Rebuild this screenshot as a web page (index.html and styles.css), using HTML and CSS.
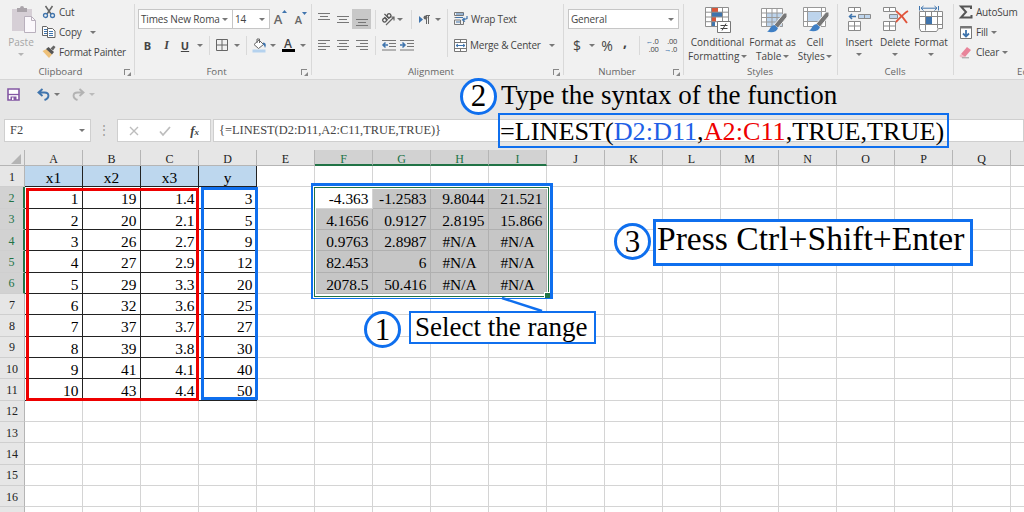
FILE: index.html
```html
<!DOCTYPE html>
<html lang="en">
<head>
  <meta charset="UTF-8">
  <meta name="viewport" content="width=device-width, initial-scale=1.0">
  <title>LINEST Function</title>
  <link rel="stylesheet" href="styles.css">
</head>
<body>

  <div class="ribbon">

    <!-- Clipboard -->
    <div class="group clipboard">
      <div class="tools">
        <div class="big-btn disabled">
          <svg width="26" height="28" viewBox="0 0 26 28"><path d="M1 3h20v22H1z" fill="#d6cfd6"/><path d="M6 2h3a2 2 0 0 1 4 0h3v4H6z" fill="#aaa4aa"/><path d="M13.500 10.500h7l4 4v12h-11z" fill="#fbf8fc" stroke="#b9b0bd"/><path d="M20.500 10.500v4h4" fill="none" stroke="#b9b0bd"/></svg>
          <span>Paste</span>
          <i class="caret"></i>
        </div>
        <div class="list">
          <div class="item">
            <svg width="14" height="14" viewBox="0 0 14 14"><path d="M3.500 1l5.500 8M10.500 1L5 9" stroke="#666" stroke-width="1.500" fill="none"/><circle cx="3.500" cy="10.500" r="2" fill="none" stroke="#3f74ad" stroke-width="1.300"/><circle cx="10.500" cy="10.500" r="2" fill="none" stroke="#3f74ad" stroke-width="1.300"/></svg>
            <span>Cut</span>
          </div>
          <div class="item">
            <svg width="14" height="14" viewBox="0 0 14 14"><path d="M.5 1.500h4l2 2v7h-6z" fill="#fff" stroke="#666"/><path d="M2 4.500h3M2 6.500h3M2 8.500h3" stroke="#3f74ad"/><path d="M5.500 3.500h5l2.500 2.500v6.500H5.500z" fill="#fff" stroke="#666"/><path d="M7 6.500h4M7 8.500h4M7 10.500h4" stroke="#3f74ad"/></svg>
            <span>Copy</span><i class="caret far"></i>
          </div>
          <div class="item">
            <svg width="14" height="14" viewBox="0 0 14 14"><path d="M.5 6l4-2 5.500 5.500L7 13z" fill="#eec078"/><path d="M4 4l2.500-2L12 7l-2 2.500z" fill="#555"/><path d="M8.500 3.500l3-3L13.500 2l-2.500 3.500z" fill="#666"/></svg>
            <span>Format Painter</span>
          </div>
        </div>
      </div>
      <div class="caption">Clipboard<b class="launcher"></b></div>
    </div>

    <!-- Font -->
    <div class="group font">
      <div class="tools stacked">
        <div class="row font-top">
          <div class="select"><span>Times New Roma</span><i class="caret"></i></div>
          <div class="select"><span>14</span><i class="caret"></i></div>
          <span class="grow">A<svg width="5" height="4" viewBox="0 0 5 4"><path d="M0 3l2.500-3L5 3z" fill="#3f74ad"/></svg></span>
          <span class="grow small">A<svg width="5" height="4" viewBox="0 0 5 4"><path d="M0 0h5L2.500 3z" fill="#3f74ad"/></svg></span>
        </div>
        <div class="row font-bottom">
          <b>B</b><b class="italic">I</b><b class="under">U</b><i class="caret"></i><i class="sep"></i>
          <svg width="12" height="12" viewBox="0 0 12 12"><path d="M.5.5h11v11H.5zM6 0v12M0 6h12" fill="none" stroke="#666"/></svg>
          <i class="caret"></i><i class="sep"></i>
          <svg width="15" height="15" viewBox="0 0 15 15"><path d="M7 2l4.500 4.500-5 4L2 6.500z" fill="#fff" stroke="#666"/><path d="M5 5V1h2.500v4" fill="none" stroke="#666"/><path d="M11 4.500c3 0 3.500 3 2 5.500-.5-2-1-3-2-3.500z" fill="#3f74ad"/><path d="M.5 11.500h13v3H.5z" fill="#b5d2ee"/></svg>
          <i class="caret"></i>
          <span class="font-color">A</span>
          <i class="caret"></i>
        </div>
      </div>
      <div class="caption">Font<b class="launcher"></b></div>
    </div>

    <!-- Alignment -->
    <div class="group alignment">
      <div class="tools">
        <div class="stacked align-left">
          <div class="row align-top">
            <svg class="up" width="12" height="8" viewBox="0 0 12 8"><path d="M0 1.500h12M2 4.500h8M0 7.500h12" stroke="#777"/></svg>
            <svg width="12" height="8" viewBox="0 0 12 8"><path d="M0 1.500h12M2 4.500h8M0 7.500h12" stroke="#777"/></svg>
            <span class="pressed"><svg width="12" height="8" viewBox="0 0 12 8"><path d="M0 1.500h12M2 4.500h8M0 7.500h12" stroke="#777"/></svg></span>
            <i class="sep"></i>
            <svg width="14" height="14" viewBox="0 0 14 14"><path d="M5 13l8-8M13 8.500V5H9.500" fill="none" stroke="#666" stroke-width="1.200"/><g transform="rotate(-45 5 6)" fill="none" stroke="#555" stroke-width="1.300"><circle cx="2.500" cy="6.500" r="1.900"/><path d="M4.600 4.200v4.600M6.800 2v6.800"/><circle cx="8.800" cy="6.500" r="1.900"/></g></svg>
            <i class="caret"></i><i class="sep"></i>
            <svg width="11" height="9" viewBox="0 0 11 9"><path d="M0 1l4 3.500L0 8z" fill="#3f74ad"/><path d="M7.500 9V.5M9.500 9V.5M11 .5H7" fill="none" stroke="#666"/><circle cx="6.500" cy="2.500" r="2" fill="#666"/></svg>
            <i class="caret"></i>
          </div>
          <div class="row align-bottom">
            <svg width="12" height="10" viewBox="0 0 12 10"><path d="M0 .5h12M0 3.500h8M0 6.500h12M0 9.500h8" stroke="#777"/></svg>
            <svg width="12" height="10" viewBox="0 0 12 10"><path d="M0 .5h12M2 3.500h8M0 6.500h12M2 9.500h8" stroke="#777"/></svg>
            <svg width="12" height="10" viewBox="0 0 12 10"><path d="M0 .5h12M4 3.500h8M0 6.500h12M4 9.500h8" stroke="#777"/></svg>
            <i class="sep"></i>
            <svg width="14" height="11" viewBox="0 0 14 11"><path d="M0 .5h14M7 3.500h7M7 6.500h7M0 10h14" stroke="#777"/><path d="M6 5H1M3.500 2.500L1 5l2.500 2.500" fill="none" stroke="#3f74ad" stroke-width="1.500"/></svg>
            <svg width="14" height="11" viewBox="0 0 14 11"><path d="M0 .5h14M7 3.500h7M7 6.500h7M0 10h14" stroke="#777"/><path d="M0 5h5M2.500 2.500L5 5 2.500 7.500" fill="none" stroke="#3f74ad" stroke-width="1.500"/></svg>
          </div>
        </div>
        <div class="stacked align-right">
          <div class="item">
            <svg width="14" height="14" viewBox="0 0 14 14"><path d="M.5.5h9v3h-9zM.5 5.500h8M.5 8h6v4.500h-6zM6.500 12.500h3V9" fill="none" stroke="#777"/><path d="M2 2h8M2 5.500h7M2 10h4" stroke="#3f74ad"/><path d="M13 4v2.500L8.500 8M10.500 6L8.500 8l2.500 1.500" fill="none" stroke="#3f74ad" stroke-width="1.200"/></svg>
            <span>Wrap Text</span>
          </div>
          <div class="item">
            <svg width="13" height="13" viewBox="0 0 13 13"><path d="M.5.500h12v12H.5zM.5 3.500h12M.5 9.500h12M6.500.500v3M6.500 9.500v3" fill="#fff" stroke="#777"/><path d="M2 6.500h9M4 5L2 6.500 4 8M9 5l2 1.500L9 8" fill="none" stroke="#3f74ad"/></svg>
            <span>Merge &amp; Center</span><i class="caret far"></i>
          </div>
        </div>
      </div>
      <div class="caption">Alignment<b class="launcher"></b></div>
    </div>

    <!-- Number -->
    <div class="group number">
      <div class="tools stacked">
        <div class="row"><div class="select"><span>General</span><i class="caret"></i></div></div>
        <div class="row number-bottom">
          <span>$</span><i class="caret"></i><span>%</span><span class="comma">,</span><i class="sep"></i>
          <span class="decimals"><span><em>←</em>.0</span><span>.00</span></span>
          <span class="decimals"><span>.00</span><span><em>→</em>.0</span></span>
        </div>
      </div>
      <div class="caption">Number<b class="launcher"></b></div>
    </div>

    <!-- Styles -->
    <div class="group styles">
      <div class="tools">
        <div class="big-btn">
          <svg width="28" height="27" viewBox="0 0 28 27"><path d="M1.500 1.500h23v19h-23z" fill="#fff"/><path d="M8 1.500h6v5H8zM8 11h4v5H8z" fill="#d9573a"/><path d="M8 6h10v5H8zM8 16h3v5H8z" fill="#3f74ad"/><path d="M1.500 1.500h23v19h-23zM1.500 6.200h23M1.500 11h23M1.500 15.700h23M7.500 1.500v19M18.500 1.500v19" fill="none" stroke="#8f8f8f"/><path d="M13.500 15.500h13v11h-13z" fill="#fff" stroke="#777"/><path d="M16.500 19.500h7M16.500 22.500h7M22 17.500l-4 7" stroke="#444"/></svg>
          <span>Conditional<br>Formatting <i class="caret"></i></span>
        </div>
        <div class="big-btn table-btn">
          <svg width="28" height="27" viewBox="0 0 28 27"><path d="M2.500 2.500h21v18h-21z" fill="#fff"/><path d="M8 7h16v14H8z" fill="#bdd4ec"/><path d="M2.500 2.500h21v18h-21zM2.500 7h21M2.500 11.500h21M2.500 16h21M7.500 2.500v18M13 2.500v18M18 2.500v18" fill="none" stroke="#999"/><path d="M15 19L25 7h3v4l-9 11z" fill="#777" stroke="#f1f1f1"/><path d="M8 25.500c3-1 3-6 7.500-6.500l3.500 3c-1 4-6 5-11 3.500z" fill="#3f7fc4"/></svg>
          <span>Format as<br>Table <i class="caret"></i></span>
        </div>
        <div class="big-btn cell-btn">
          <svg width="28" height="27" viewBox="0 0 28 27"><path d="M2.500 1.500h22v19h-22z" fill="#fff"/><path d="M7 6h14v9H7z" fill="#bdd4ec"/><path d="M2.500 1.500h22v19h-22zM2.500 5.500h22M2.500 15.500h22M6.500 1.500v19M20.500 1.500v19" fill="none" stroke="#999"/><path d="M15 18L25 6h3v4l-9 11z" fill="#777" stroke="#f1f1f1"/><path d="M8 24.500c3-1 3-6 7.500-6.500l3.500 3c-1 4-6 5-11 3.500z" fill="#3f7fc4"/></svg>
          <span>Cell<br>Styles <i class="caret"></i></span>
        </div>
      </div>
      <div class="caption">Styles</div>
    </div>

    <!-- Cells -->
    <div class="group cells">
      <div class="tools">
        <div class="big-btn">
          <svg width="26" height="27" viewBox="0 0 26 27"><path d="M2.500 1.500h12v4h-12zM8.500 1.500v4M2.500 15.500h12v9h-12zM8.500 15.500v9M2.500 20h12" fill="#fff" stroke="#8a8a8a"/><path d="M12.500 8.500h12v4h-12zM18.500 8.500v4" fill="#bdd4ec" stroke="#8a8a8a"/><path d="M10 10.500H4M6 8l-2.500 2.500L6 13" fill="none" stroke="#3f74ad" stroke-width="1.500"/></svg>
          <span>Insert</span><i class="caret"></i>
        </div>
        <div class="big-btn">
          <svg width="28" height="27" viewBox="0 0 28 27"><path d="M2.500 1.500h12v4h-12zM8.500 1.500v4M2.500 15.500h12v9h-12zM8.500 15.500v9M2.500 20h12" fill="#fff" stroke="#8a8a8a"/><path d="M8.500 8.500h8v4h-8z" fill="#bdd4ec" stroke="#8a8a8a"/><path d="M15 5c4 3 8 7 11 12M27 5c-5 3-8 7-12 11" fill="none" stroke="#e0533a" stroke-width="1.800"/></svg>
          <span>Delete</span><i class="caret"></i>
        </div>
        <div class="big-btn">
          <svg width="26" height="27" viewBox="0 0 26 27"><path d="M1.500 5.500h23v17h-4l-2 3H3l-1.500-3z" fill="#fff" stroke="#8a8a8a"/><path d="M1.500 10.500h23M1.500 18.500h23M7.500 5.500v19M13.500 5.500v5M19.500 5.500v17" stroke="#8a8a8a" fill="none"/><path d="M8 11h6v7H8z" fill="#3f74ad"/><path d="M1.500 0v4.500M20.500 0v4.500M3 2.200h16M5.500 0L3 2.200l2.500 2.300M16.500 0L19 2.200l-2.500 2.300" fill="none" stroke="#3f74ad"/></svg>
          <span>Format</span><i class="caret"></i>
        </div>
      </div>
      <div class="caption">Cells</div>
    </div>

    <!-- Editing -->
    <div class="group editing">
      <div class="list">
        <div class="item">
          <svg width="14" height="14" viewBox="0 0 14 14"><path d="M12 4V1.500H2L7 7l-5 5.500h10.500V10" fill="none" stroke="#555" stroke-width="2"/></svg>
          <span>AutoSum</span>
        </div>
        <div class="item">
          <svg width="14" height="14" viewBox="0 0 14 14"><path d="M1.500 1.500h11v12h-11z" fill="#fff" stroke="#777"/><path d="M1 2.500h12" stroke="#777" stroke-width="2"/><path d="M7 5v6M4 8.500L7 11.500l3-3" fill="none" stroke="#3f74ad" stroke-width="1.800"/></svg>
          <span>Fill</span><i class="caret"></i>
        </div>
        <div class="item">
          <svg width="14" height="14" viewBox="0 0 14 14"><path d="M2 9l6-7 4 3-6 7z" fill="#e8849a"/><path d="M2 9l4 3-1 .5H2L.5 11z" fill="#f3b9c5"/><path d="M3 12.800h7" stroke="#999"/></svg>
          <span>Clear</span><i class="caret"></i>
        </div>
      </div>
      <div class="caption">Editing</div>
    </div>
  </div>

  <!-- Quick access toolbar -->
  <div class="quick-access">
    <svg width="13" height="13" viewBox="0 0 13 13"><path d="M1 1h11v11H1z" fill="#fff" stroke="#8458a4" stroke-width="1.600"/><path d="M1 6.500h11" stroke="#8458a4" stroke-width="1.300"/><path d="M3.500 8.500h6V12h-6z" fill="#8458a4"/><path d="M5 9.500h1.500V12H5z" fill="#fff"/></svg>
    <svg width="13" height="13" viewBox="0 0 13 13"><path d="M5.500 1L1.500 4.500l4 3.500M2 4.500h5.500c5 0 5.500 5.500 0 7.500" fill="none" stroke="#3f74ad" stroke-width="1.900"/></svg>
    <i class="caret"></i>
    <svg width="13" height="13" viewBox="0 0 13 13"><path d="M7.500 1l4 3.500-4 3.500M11 4.500H5.500c-5 0-5.500 5.500 0 7.500" fill="none" stroke="#b3b3b3" stroke-width="1.900"/></svg>
    <i class="caret light"></i>
  </div>

  <!-- Formula bar -->
  <div class="formula-bar">
    <div class="name-box"><span>F2</span><i class="caret"></i></div>
    <div class="dots">⋮</div>
    <div class="formula-buttons">
      <svg width="10" height="10" viewBox="0 0 10 10"><path d="M1 1l8 8M9 1L1 9" stroke="#bdbdbd" stroke-width="1.400"/></svg>
      <svg width="12" height="10" viewBox="0 0 12 10"><path d="M1 5.500L4 9l7-8" fill="none" stroke="#bdbdbd" stroke-width="1.800"/></svg>
      <span class="fx">f<small>x</small></span>
    </div>
    <div class="formula-input">{=LINEST(D2:D11,A2:C11,TRUE,TRUE)}</div>
  </div>

  <!-- Worksheet -->
  <div class="sheet" id="sheet"></div>

  <!-- Notes over the sheet -->
  <div class="mark mark-x"></div>
  <div class="mark mark-y"></div>
  <div class="mark mark-range"></div>
  <svg class="pointer" width="44" height="16" viewBox="0 0 44 16"><path d="M2 1l40 13" stroke="#0f6fee" stroke-width="2.500"/></svg>

  <div class="step step-1">1</div>
  <div class="note note-select">Select the range</div>

  <div class="step step-2">2</div>
  <div class="note note-type">Type the syntax of the function</div>
  <div class="note note-formula">=LINEST(<span class="blue">D2:D11</span>,<span class="red">A2:C11</span>,TRUE,TRUE)</div>

  <div class="step step-3">3</div>
  <div class="note note-press">Press Ctrl+Shift+Enter</div>

  <script>
    const columns = 'ABCDEFGHIJKLMNOPQR'.split('');
    const data = [
      ['x1', 'x2', 'x3', 'y'],
      [1, 19, 1.4, 3],
      [2, 20, 2.1, 5],
      [3, 26, 2.7, 9],
      [4, 27, 2.9, 12],
      [5, 29, 3.3, 20],
      [6, 32, 3.6, 25],
      [7, 37, 3.7, 27],
      [8, 39, 3.8, 30],
      [9, 41, 4.1, 40],
      [10, 43, 4.4, 50]
    ];
    const result = [
      ['-4.363', '-1.2583', '9.8044', '21.521'],
      ['4.1656', '0.9127', '2.8195', '15.866'],
      ['0.9763', '2.8987', '#N/A', '#N/A'],
      ['82.453', '6', '#N/A', '#N/A'],
      ['2078.5', '50.416', '#N/A', '#N/A']
    ];
    const sheet = document.getElementById('sheet');

    function addCell(text, className) {
      const cell = document.createElement('div');
      cell.className = className;
      cell.textContent = text;
      sheet.appendChild(cell);
    }

    // Column letters
    addCell('', 'corner');
    columns.forEach((name, c) => {
      const active = c >= 5 && c <= 8;
      addCell(name === 'R' ? '' : name, active ? 'col-head active' : 'col-head');
    });

    // Rows
    for (let r = 1; r <= 17; r++) {
      const activeRow = r >= 2 && r <= 6;
      addCell(r < 17 ? r : '', activeRow ? 'row-head active' : 'row-head');

      for (let c = 0; c < columns.length; c++) {
        let text = '';
        let className = 'cell';

        if (c < 4 && r <= 11) {
          text = data[r - 1][c];
          className += r === 1 ? ' data title' : ' data';
        } else if (activeRow && c >= 5 && c <= 8) {
          text = result[r - 2][c - 5];
          className += r === 2 && c === 5 ? '' : ' selected';
          if (text === '#N/A') className += ' error';
        }
        addCell(text, className);
      }
    }
  </script>

</body>
</html>
```
FILE: styles.css
```css
/* General Page Styles */
* {
  box-sizing: border-box;
}

body {
  margin: 0;
  width: 1024px;
  height: 512px;
  overflow: hidden;
  position: relative;
  background: #fff;
  font-family: "Open Sans", "Noto Sans", sans-serif;
  font-size: 10px;
  color: #444;
}

svg {
  display: block;
  flex: none;
  overflow: visible;
}

/* Ribbon */
.ribbon {
  display: flex;
  height: 80px;
  background: #f1f1f1;
  border-bottom: 1px solid #d6d6d6;
  overflow: hidden;
}

.group {
  flex: none;
  display: flex;
  flex-direction: column;
  position: relative;
}

.group::after {
  content: "";
  position: absolute;
  right: 0;
  top: 4px;
  bottom: 4px;
  width: 1px;
  background: #d9d9d9;
}

.clipboard { width: 135px; }
.font { width: 177px; }
.alignment { width: 252px; }
.number { width: 120px; }
.styles { width: 154px; }
.cells { width: 116px; }
.editing { width: 150px; }

.tools {
  display: flex;
  height: 65px;
}

.stacked {
  display: flex;
  flex-direction: column;
}

.caption {
  height: 14px;
  line-height: 14px;
  text-align: center;
  font-size: 9.7px;
  color: #666;
  padding-right: 14px;
  position: relative;
}

.styles .caption, .cells .caption {
  padding-right: 2px;
}

.launcher {
  position: absolute;
  right: 5px;
  top: 4px;
  width: 6px;
  height: 6px;
  border-left: 1px solid #888;
  border-top: 1px solid #888;
}

.launcher::after {
  content: "";
  position: absolute;
  left: 2px;
  top: 2px;
  border-left: 4px solid transparent;
  border-bottom: 4px solid #888;
}

.caret {
  flex: none;
  display: inline-block;
  width: 0;
  height: 0;
  border: 3px solid transparent;
  border-top-color: #777;
  border-bottom: 0;
}

.caret.far {
  margin-left: 5px;
}

.caret.light {
  border-top-color: #bbb;
}

.sep {
  width: 1px;
  height: 19px;
  background: #d9d9d9;
}

.item {
  display: flex;
  align-items: center;
  gap: 3px;
  height: 20px;
  line-height: 20px;
  white-space: nowrap;
  letter-spacing: -0.2px;
}

.list {
  padding-top: 2px;
}

/* Large buttons */
.big-btn {
  display: flex;
  flex-direction: column;
  align-items: center;
  padding-top: 6px;
  line-height: 14px;
  text-align: center;
  white-space: nowrap;
}

.big-btn svg {
  margin-bottom: 2px;
}

.big-btn span .caret {
  vertical-align: 2px;
  margin-left: -1px;
}

.big-btn > .caret {
  margin-top: 4px;
}

.disabled {
  width: 42px;
  color: #a6a6a6;
}

.disabled svg {
  margin: 0 0 1px 5px;
}

.disabled .caret {
  border-top-color: #b5b5b5;
}

/* Select boxes and rows */
.row {
  display: grid;
  align-items: center;
  justify-items: center;
  height: 20px;
}

.select {
  width: 100%;
  height: 20px;
  display: flex;
  justify-content: space-between;
  align-items: center;
  padding: 0 4px 0 2px;
  background: #fff;
  border: 1px solid #c6c6c6;
  white-space: nowrap;
  letter-spacing: -0.15px;
}

.font .tools {
  padding: 9px 0 0 3px;
  gap: 6px;
}

.font-top {
  grid-template-columns: 95px 37px 21px 20px;
}

.font-top .select + .select {
  border-left: 0;
}

.font-bottom {
  grid-template-columns: 19px 19px 18px 12px 6px 20px 10px 8px 19px 8px 22px 7px;
  font-size: 11px;
}

.italic {
  font-family: "Liberation Serif", serif;
  font-style: italic;
  font-size: 12px;
}

.under {
  text-decoration: underline;
}

.grow {
  display: flex;
  font-size: 13px;
  font-weight: 600;
  color: #666;
}

.grow.small {
  font-size: 11px;
}

.font-color {
  width: 13px;
  height: 14px;
  line-height: 11px;
  text-align: center;
  font-size: 12px;
  font-weight: 600;
  border-bottom: 3px solid #000;
}

/* Alignment */
.align-left {
  width: 135px;
  padding: 9px 0 0 3px;
  gap: 6px;
}

.align-top {
  grid-template-columns: 18px 19px 19px 9px 16px 8px 14px 12px 16px;
}

.align-bottom {
  grid-template-columns: 18px 19px 19px 9px 17px 20px;
}

.align-top .up {
  margin-bottom: 7px;
}

.pressed {
  width: 19px;
  height: 20px;
  padding: 9px 3px 0 4px;
  background: #c8c8c8;
}

.align-right {
  height: 48px;
  margin-top: 9px;
  padding-left: 6px;
  gap: 6px;
  border-left: 1px solid #d9d9d9;
}

/* Number */
.number .tools {
  padding: 9px 5px 0 4px;
  gap: 6px;
}

.number-bottom {
  grid-template-columns: 18px 11px 20px 16px 12px 14px 23px;
  font-size: 14px;
}

.comma {
  font-weight: 700;
  margin-top: -8px;
}

.decimals {
  display: flex;
  flex-direction: column;
  align-items: flex-end;
  font-size: 7.5px;
  line-height: 8px;
  letter-spacing: -0.3px;
}

.decimals em {
  font-style: normal;
  color: #3f74ad;
}

/* Styles and Cells */
.styles .big-btn {
  width: 67px;
}

.styles .table-btn {
  width: 43px;
}

.styles .cell-btn {
  width: 42px;
}

.cells .tools {
  padding-left: 3px;
}

.cells .big-btn {
  width: 36px;
}

.editing .list {
  height: 65px;
  padding-left: 5px;
}

.editing .caption {
  padding: 0 0 0 63px;
  text-align: left;
}

/* Quick access toolbar */
.quick-access {
  display: flex;
  align-items: center;
  height: 39px;
  padding: 0 0 10px 7px;
  background: #e6e6e6;
}

.quick-access svg + svg {
  margin-left: 17px;
}

.quick-access .caret {
  margin-left: 4px;
}

.quick-access .caret + svg {
  margin-left: 12px;
}

/* Formula bar */
.formula-bar {
  display: flex;
  height: 31px;
  padding: 0 0 8px 4px;
  background: #e6e6e6;
  font-family: "Liberation Serif", serif;
  font-size: 12.4px;
}

.name-box, .formula-buttons, .formula-input {
  display: flex;
  align-items: center;
  background: #fff;
  border: 1px solid #cfcfcf;
}

.name-box {
  width: 87px;
  justify-content: space-between;
  padding: 0 5px;
}

.dots {
  width: 26px;
  line-height: 22px;
  text-align: center;
  color: #999;
}

.formula-buttons {
  width: 94px;
  justify-content: space-between;
  padding: 0 11px;
}

.fx {
  font-style: italic;
  font-size: 13px;
  font-weight: bold;
}

.fx small {
  font-size: 9px;
}

.formula-input {
  flex: 1;
  margin-left: 2px;
  padding-left: 5px;
}

/* Worksheet */
.sheet {
  display: grid;
  grid-template-columns: 25px repeat(18, 58px);
  grid-template-rows: 16px repeat(17, 21.333px);
  width: 1069px;
  font-family: "Liberation Serif", serif;
  color: #000;
}

.corner, .col-head, .row-head {
  display: flex;
  align-items: center;
  justify-content: center;
  padding-top: 2px;
  background: #e6e6e6;
  font-size: 12px;
  color: #222;
  border-right: 1px solid #b5b5b5;
  border-bottom: 1px solid #b5b5b5;
}

.col-head {
  line-height: 14px;
  padding-top: 3px;
}

.corner {
  justify-content: flex-end;
}

.corner::after {
  content: "";
  margin-right: 3px;
  border-left: 10px solid transparent;
  border-bottom: 10px solid #b4b4b4;
}

.row-head {
  border-bottom-color: #cfcfcf;
}

.col-head.active {
  background: #d2d2d2;
  color: #217346;
  border-bottom: 2px solid #217346;
}

.row-head.active {
  background: #d2d2d2;
  color: #217346;
  border-right: 2px solid #217346;
}

.cell {
  padding-right: 3.5px;
  text-align: right;
  font-size: 15.4px;
  line-height: 24px;
  border-right: 1px solid #d4d4d4;
  border-bottom: 1px solid #d4d4d4;
}

.cell.data {
  border-color: #222;
}

.cell.title {
  padding-right: 0;
  text-align: center;
  background: #bdd7ee;
}

.cell.selected {
  background: #c6c6c6;
  border-color: #b0b0b0;
}

.cell.error {
  padding-right: 0;
  text-align: center;
}

/* Notes */
.mark, .note, .step, .pointer {
  position: absolute;
}

.mark-x {
  left: 26px;
  top: 188px;
  width: 173px;
  height: 213px;
  border: 3px solid #ee0000;
}

.mark-y {
  left: 201px;
  top: 187px;
  width: 57px;
  height: 213px;
  border: 3px solid #0f6fee;
}

.mark-range {
  left: 311px;
  top: 183px;
  width: 242px;
  height: 116px;
  border: 3px solid #0f6fee;
}

/* Green selection frame with its fill handle */
.mark-range::before {
  content: "";
  position: absolute;
  left: 0;
  top: 1px;
  width: 233px;
  height: 108px;
  border: 1px solid #217346;
  box-shadow: 0 0 0 1px #fff, inset 0 0 0 1px #fff;
}

.mark-range::after {
  content: "";
  position: absolute;
  left: 230px;
  top: 106px;
  width: 5px;
  height: 5px;
  background: #217346;
  border: 1px solid #fff;
  border-width: 1px 0 0 1px;
}

.pointer {
  left: 500px;
  top: 297px;
}

.step {
  width: 37px;
  height: 37px;
  line-height: 31px;
  text-align: center;
  font-family: "Liberation Serif", serif;
  font-size: 31px;
  color: #000;
  background: #fff;
  border: 3px solid #0f6fee;
  border-radius: 50%;
}

.step-1 { left: 364px; top: 311px; }
.step-2 { left: 460px; top: 78px; line-height: 30px; }
.step-3 { left: 614px; top: 223px; }

.note {
  font-family: "Liberation Serif", serif;
  font-size: 27px;
  color: #000;
  white-space: nowrap;
}

.note-select {
  left: 409px;
  top: 311px;
  width: 187px;
  height: 33px;
  padding-left: 4px;
  line-height: 28px;
  background: #fff;
  border: 2px solid #0f6fee;
}

.note-type {
  left: 501px;
  top: 79px;
  line-height: 32px;
}

.note-formula {
  left: 498px;
  top: 113px;
  width: 451px;
  height: 35px;
  font-size: 26.2px;
  line-height: 33px;
  border: 2px solid #0f6fee;
}

.note-press {
  left: 653px;
  top: 219px;
  width: 320px;
  height: 47px;
  padding-left: 1px;
  font-size: 33.6px;
  line-height: 33px;
  background: #fff;
  border: 3px solid #0f6fee;
}

.blue { color: #1e5fe6; }
.red { color: #ee0000; }
```
